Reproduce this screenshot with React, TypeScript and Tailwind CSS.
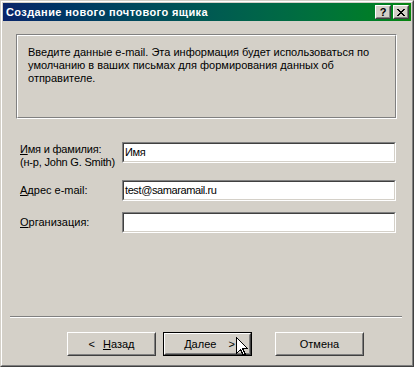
import React from "react";

function U({ children }: { children: React.ReactNode }) {
  return <span className="underline underline-offset-[1px]">{children}</span>;
}

function Button({ children, def }: { children: React.ReactNode; def?: boolean }) {
  const inner = (
    <div className="w-full h-full border border-t-white border-l-white border-b-[#404040] border-r-[#404040]">
      <div className="w-full h-full border border-t-[#d4d0c8] border-l-[#d4d0c8] border-b-[#808080] border-r-[#808080] flex items-center justify-center text-black">
        {children}
      </div>
    </div>
  );
  if (def) {
    return <div className="w-[89px] h-[24px] border border-black">{inner}</div>;
  }
  return <div className="w-[89px] h-[24px]">{inner}</div>;
}

function Field({ value }: { value?: string }) {
  return (
    <div className="w-[274px] h-[21px] border border-t-[#808080] border-l-[#808080] border-b-white border-r-white">
      <div className="w-full h-full border border-t-[#404040] border-l-[#404040] border-b-[#d4d0c8] border-r-[#d4d0c8] bg-white flex items-center pl-[1px] text-black tracking-[-0.4px]">
        {value}
      </div>
    </div>
  );
}

function TitleBtn({ children }: { children: React.ReactNode }) {
  return (
    <div className="w-[16px] h-[14px] bg-[#d4d0c8] border border-t-white border-l-white border-b-[#404040] border-r-[#404040]">
      <div className="w-full h-full border border-t-[#d4d0c8] border-l-[#d4d0c8] border-b-[#808080] border-r-[#808080] flex items-center justify-center">
        {children}
      </div>
    </div>
  );
}

export default function App() {
  return (
    <div className="relative w-[414px] h-[367px] bg-[#d4d0c8] font-['Liberation_Sans',Arial,sans-serif] text-[11px] leading-[13px] text-black overflow-hidden">
      <div className="w-full h-full border border-t-[#d4d0c8] border-l-[#d4d0c8] border-b-[#404040] border-r-[#404040]">
        <div className="w-full h-full border border-t-white border-l-white border-b-[#808080] border-r-[#808080] p-[1px] flex flex-col">
          {/* Title bar */}
          <div className="h-[18px] flex items-center justify-between bg-gradient-to-r from-[#0a246a] to-[#07850a] pl-[3px] pr-[2px]">
            <span className="text-white font-bold text-[11px] tracking-[0.4px]">Создание нового почтового ящика</span>
            <div className="flex gap-[2px]">
              <TitleBtn>
                <span className="font-bold text-[11px] leading-[10px] text-black">?</span>
              </TitleBtn>
              <TitleBtn>
                <svg width="8" height="7" viewBox="0 0 8 7" shapeRendering="crispEdges">
                  <path d="M0 0h2v1h-2zM6 0h2v1h-2zM1 1h2v1h-2zM5 1h2v1h-2zM2 2h4v1h-4zM3 3h2v1h-2zM2 4h4v1h-4zM1 5h2v1h-2zM5 5h2v1h-2zM0 6h2v1h-2zM6 6h2v1h-2z" fill="#000" />
                </svg>
              </TitleBtn>
            </div>
          </div>

          {/* Info box */}
          <div className="ml-[13px] mt-[13px] w-[381px] h-[85px] border border-t-[#808080] border-l-[#808080] border-b-white border-r-white">
            <div className="w-full h-full border border-t-white border-l-white border-b-[#808080] border-r-[#808080] pl-[10px] pt-[10px] pr-[10px]">
              Введите данные e-mail. Эта информация будет использоваться по умолчанию в ваших письмах для формирования данных об отправителе.
            </div>
          </div>

          {/* Form */}
          <div className="ml-[17px] mt-[23px] flex flex-col gap-[11px]">
            <div className="flex items-start">
              <div className="w-[102px] pt-[1px] tracking-[-0.2px]">
                <div><U>И</U>мя и фамилия:</div>
                <div>(н-р, John G. Smith)</div>
              </div>
              <Field value="Имя" />
            </div>
            <div className="flex items-center">
              <div className="w-[102px]"><U>А</U>дрес e-mail:</div>
              <Field value="test@samaramail.ru" />
            </div>
            <div className="flex items-center">
              <div className="w-[102px]"><U>О</U>рганизация:</div>
              <Field />
            </div>
          </div>

          {/* Separator */}
          <div className="ml-[7px] mt-[83px] w-[392px] h-[2px] border-t border-t-[#808080] border-b border-b-white" />

          {/* Buttons */}
          <div className="ml-[64px] mt-[14px] flex">
            <Button>
              <span>&lt;</span>
              <span className="ml-[8px]"><U>Н</U>азад</span>
            </Button>
            <div className="w-[7px]" />
            <Button def>
              <span className="ml-[4px]"><U>Д</U>алее</span>
              <span className="ml-[12px]">&gt;</span>
            </Button>
            <div className="w-[23px]" />
            <Button>Отмена</Button>
          </div>
        </div>
      </div>

      {/* Mouse cursor */}
      <svg className="absolute left-[236px] top-[337px]" width="13" height="20" viewBox="0 0 13 20" shapeRendering="crispEdges">
        <path d="M0.5 0.5 V16.5 L4.5 12.5 L7.5 18.5 L9.5 17.5 L6.5 11.5 H11.5 Z" fill="#fff" stroke="#000" strokeWidth="1" strokeLinejoin="miter" />
      </svg>
    </div>
  );
}
